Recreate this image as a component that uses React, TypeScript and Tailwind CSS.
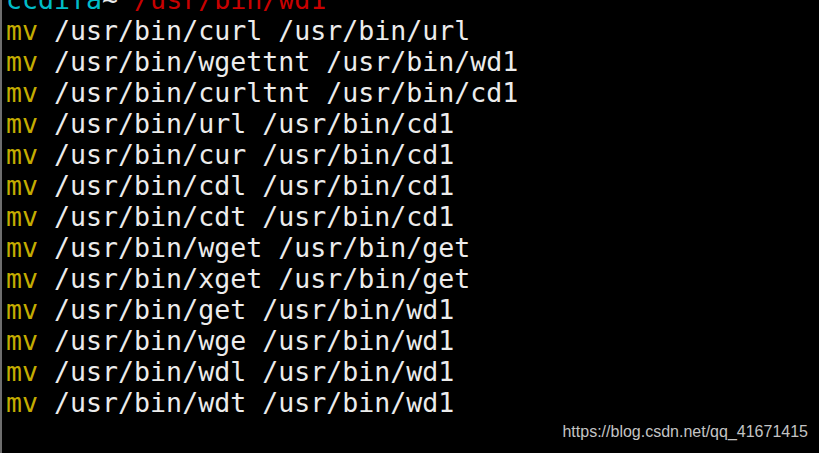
const lines: [string, string][] = [
  ['/usr/bin/curl', '/usr/bin/url'],
  ['/usr/bin/wgettnt', '/usr/bin/wd1'],
  ['/usr/bin/curltnt', '/usr/bin/cd1'],
  ['/usr/bin/url', '/usr/bin/cd1'],
  ['/usr/bin/cur', '/usr/bin/cd1'],
  ['/usr/bin/cdl', '/usr/bin/cd1'],
  ['/usr/bin/cdt', '/usr/bin/cd1'],
  ['/usr/bin/wget', '/usr/bin/get'],
  ['/usr/bin/xget', '/usr/bin/get'],
  ['/usr/bin/get', '/usr/bin/wd1'],
  ['/usr/bin/wge', '/usr/bin/wd1'],
  ['/usr/bin/wdl', '/usr/bin/wd1'],
  ['/usr/bin/wdt', '/usr/bin/wd1'],
];

export default function App() {
  return (
    <div className="relative w-[819px] h-[453px] overflow-hidden bg-black border-l-2 border-[#6e6e6e]">
      <div className="pl-[4px] -mt-[16px] font-['DejaVu_Sans_Mono',monospace] text-[26.6px] leading-[31px] text-[#ececec] whitespace-pre">
        <div>
          <span className="text-[#00bcc8]">ccdifa</span>~ <span className="text-[#c80000]">/usr/bin/wd1</span>
        </div>
        {lines.map(([from, to], i) => (
          <div key={i}>
            <span className="text-[#c4ac00]">mv</span> {from} {to}
          </div>
        ))}
      </div>
      <div className="absolute right-[11px] bottom-[9px] font-['Liberation_Sans',Arial,sans-serif] text-[16px] text-[#c4c4c4]">
        https://blog.csdn.net/qq_41671415
      </div>
    </div>
  );
}
